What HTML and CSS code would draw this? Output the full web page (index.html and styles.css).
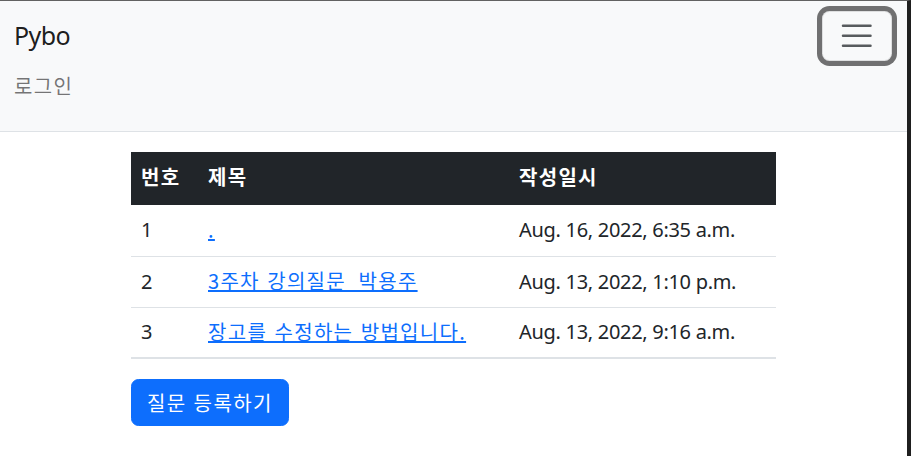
FILE: index.html
```html
<!DOCTYPE html>
<html lang="ko">
<head>
<meta charset="utf-8">
<title>Pybo</title>
<link rel="stylesheet" href="styles.css">
</head>
<body>
<div class="frame">
  <nav class="navbar">
    <div class="navbar-row">
      <a class="brand" href="#">Pybo</a>
      <button class="toggler" type="button" aria-label="Toggle navigation">
        <svg class="toggler-icon" viewBox="0 0 30 30" width="37.5" height="37.5">
          <path d="M4 7h22M4 15h22M4 23h22" stroke="rgba(33,37,41,0.75)" stroke-width="2" stroke-linecap="round" fill="none"/>
        </svg>
      </button>
    </div>
    <ul class="nav-list">
      <li><a class="nav-link" href="#">로그인</a></li>
    </ul>
  </nav>

  <main class="container">
    <table class="table">
      <thead>
        <tr>
          <th class="c-num">번호</th>
          <th class="c-title">제목</th>
          <th class="c-date">작성일시</th>
        </tr>
      </thead>
      <tbody>
        <tr>
          <td>1</td>
          <td><a href="#">.</a></td>
          <td class="date">Aug. 16, 2022, 6:35 a.m.</td>
        </tr>
        <tr>
          <td>2</td>
          <td><a href="#">3주차 강의질문_박용주</a></td>
          <td class="date">Aug. 13, 2022, 1:10 p.m.</td>
        </tr>
        <tr class="last">
          <td>3</td>
          <td><a href="#">장고를 수정하는 방법입니다.</a></td>
          <td class="date">Aug. 13, 2022, 9:16 a.m.</td>
        </tr>
      </tbody>
    </table>
    <a class="btn-primary" href="#">질문 등록하기</a>
  </main>
</div>
</body>
</html>
```

FILE: styles.css
```css
* { box-sizing: border-box; }

html, body {
  margin: 0;
  padding: 0;
  background: #fff;
}

body {
  font-family: "Noto Sans", "Noto Sans CJK KR", sans-serif;
  font-size: 20px;
  line-height: 30px;
  color: #212529;
}

.frame {
  border-top: 1px solid #626262;
  border-right: 4px solid #1f1f1f;
  min-height: 456px;
}

.navbar {
  background: #f8f9fa;
  border-bottom: 1px solid #dee2e6;
  padding: 10px 15px 10px 14px;
}

.navbar-row {
  display: flex;
  align-items: center;
  justify-content: space-between;
}

.brand {
  font-size: 25px;
  line-height: 37.5px;
  padding: 6.25px 0;
  color: rgba(0, 0, 0, 0.9);
  text-decoration: none;
  letter-spacing: -0.6px;
}

.toggler {
  display: flex;
  align-items: center;
  justify-content: center;
  width: 70px;
  height: 50px;
  padding: 0;
  background: transparent;
  border: 1.25px solid rgba(0, 0, 0, 0.1);
  border-radius: 7.5px;
  box-shadow: 0 0 0 5px rgba(0, 0, 0, 0.55);
}

.toggler-icon { display: block; }

.nav-list {
  list-style: none;
  margin: 0 0 10px;
  padding: 0;
}

.nav-link {
  display: block;
  padding: 10px 0;
  color: rgba(0, 0, 0, 0.55);
  text-decoration: none;
  font-family: "Noto Sans CJK KR", sans-serif;
  letter-spacing: 1.4px;
}

.container {
  width: 645px;
  margin: 20px 0 0 131px;
}

.table {
  width: 645px;
  border-collapse: collapse;
  table-layout: fixed;
  margin-bottom: 20px;
}

.c-num { width: 67px; }
.c-title { width: 311px; }
.c-date { width: 267px; }

.table th {
  background: #212529;
  color: #fff;
  text-align: left;
  font-weight: 700;
  height: 53px;
  padding: 10px 10px 13px;
  font-family: "Noto Sans CJK KR", sans-serif;
  letter-spacing: 1.3px;
}

.table td {
  height: 51px;
  padding: 0 10px;
  border-bottom: 1px solid #dee2e6;
  vertical-align: middle;
}

.table td.date {
  letter-spacing: -0.3px;
}

.table tr.last td {
  border-bottom: 2px solid #dee2e6;
}

.table a {
  color: #0d6efd;
  text-decoration: underline;
  font-family: "Noto Sans CJK KR", sans-serif;
  letter-spacing: 1.3px;
  word-spacing: 0.5px;
}

.btn-primary {
  display: inline-block;
  background: #0d6efd;
  color: #fff;
  text-decoration: none;
  padding: 7.5px 15px;
  border: 1.25px solid #0d6efd;
  border-radius: 7.5px;
  font-family: "Noto Sans CJK KR", sans-serif;
  line-height: 30px;
  letter-spacing: 1.4px;
}
```
